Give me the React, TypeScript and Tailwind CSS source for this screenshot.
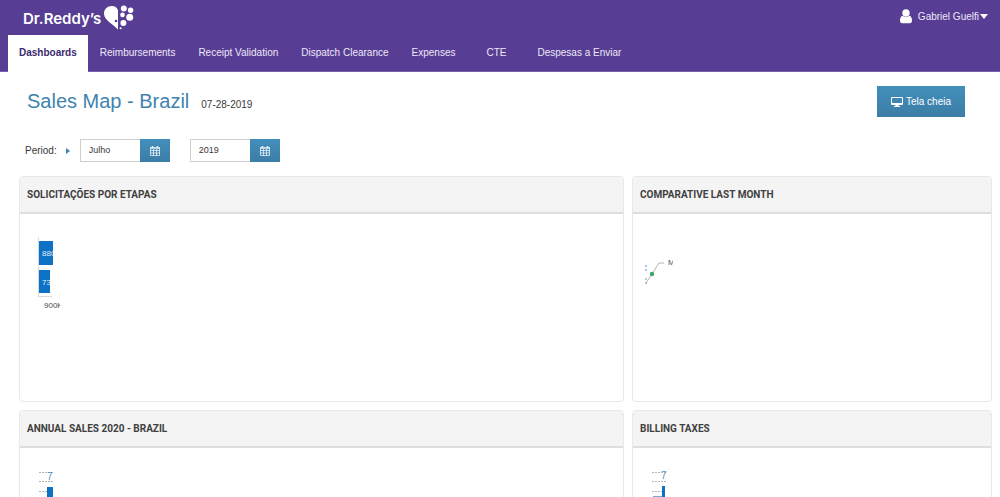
import { ReactNode } from "react";

const tabs = [
  "Reimbursements",
  "Receipt Validation",
  "Dispatch Clearance",
  "Expenses",
  "CTE",
  "Despesas a Enviar",
];

export default function App() {
  return (
    <div className="min-h-screen bg-white font-['Liberation_Sans',Arial,sans-serif] text-[10px] text-[#393939]">
      <Header />
      <main className="pl-[19px] pr-2 pb-2">
        <div className="flex items-start justify-between pl-2 pr-[27px] pt-[14px]">
          <div className="flex items-baseline gap-3">
            <h1 className="text-[20px] leading-[30px] text-[#3f83af]">Sales Map - Brazil</h1>
            <span>07-28-2019</span>
          </div>
          <button className="flex h-[31px] items-center gap-[3px] bg-linear-to-b from-[#428fbc] to-[#3c7da6] px-[14px] text-white">
            <MonitorIcon />
            Tela cheia
          </button>
        </div>

        <form className="flex items-center pl-[6px] pt-[22px] pb-[14px]">
          <span>Period:</span>
          <svg className="ml-[9px] mr-[10px] h-[6px] w-1" viewBox="0 0 4 6" fill="#3f83af">
            <path d="M0 0l4 3-4 3z" />
          </svg>
          <DateField label="Month" value="Julho" />
          <span className="w-5" />
          <DateField label="Year" value="2019" />
        </form>

        <div className="grid grid-cols-[605fr_360fr] gap-2">
          <Panel title="SOLICITAÇÕES POR ETAPAS">
            <StagesChart />
          </Panel>
          <Panel title="COMPARATIVE LAST MONTH">
            <ComparativeChart />
          </Panel>
          <Panel title="ANNUAL SALES 2020 - BRAZIL">
            <AnnualChart />
          </Panel>
          <Panel title="BILLING TAXES">
            <BillingChart />
          </Panel>
        </div>
      </main>
    </div>
  );
}

function Header() {
  return (
    <header className="border-b border-[#7a62ab] bg-[#573d94] text-[#eee8f7]">
      <div className="flex h-[35px] items-center justify-between pl-[23px] pr-3">
        <a href="#" className="flex items-center gap-[3px] text-white">
          <span className="pt-1 font-['Inter',sans-serif] text-[15px] font-semibold">Dr.Reddy’s</span>
          <Logo />
        </a>
        <button className="flex items-center gap-[6px] pb-[2px]">
          <svg className="h-[15px] w-3" viewBox="0 0 12 15" fill="white">
            <circle cx="6" cy="4" r="3.7" />
            <path d="M2.6 6.8C.8 7.3 0 9 0 11.700c0 1.500.8 2.500 2.200 2.500h7.600c1.400 0 2.200-1 2.200-2.500 0-2.700-.8-4.400-2.600-4.900-1.900 1.900-4.900 1.900-6.800 0z" />
          </svg>
          <span className="flex items-center gap-px">
            Gabriel Guelfi
            <svg className="h-[5px] w-2" viewBox="0 0 8 5" fill="white">
              <path d="M0 0h8L4 5z" />
            </svg>
          </span>
        </button>
      </div>
      <nav className="flex h-9 items-stretch gap-px pl-2">
        <a href="#" className="-mb-px flex items-center bg-white px-[11px] pb-[2px] font-bold text-[#3d2a6e]">
          Dashboards
        </a>
        {tabs.map((tab) => (
          <a key={tab} href="#" className="flex min-w-[58px] items-center justify-center px-[11px] pb-px">
            {tab}
          </a>
        ))}
      </nav>
    </header>
  );
}

function Panel({ title, children }: { title: string; children: ReactNode }) {
  return (
    <section className="overflow-hidden rounded-[4px] border border-[#e8e8e8]">
      <h2 className="flex h-[37px] items-center border-b-2 border-[#dedede] bg-[#f4f4f4] px-[7px] pb-px font-['Roboto',sans-serif] font-bold text-[#404040]">
        {title}
      </h2>
      <div className="h-[187px]">{children}</div>
    </section>
  );
}

function DateField({ label, value }: { label: string; value: string }) {
  return (
    <div className="flex h-[23px]">
      <input
        aria-label={label}
        defaultValue={value}
        className="w-[60px] border border-r-0 border-[#cfcfcf] bg-white px-2 text-[9px]"
      />
      <button
        type="button"
        aria-label={`Pick ${label.toLowerCase()}`}
        className="flex w-[30px] items-center justify-center bg-linear-to-b from-[#428fbc] to-[#3c7da6]"
      >
        <CalendarIcon />
      </button>
    </div>
  );
}

function Logo() {
  return (
    <svg className="h-[26px] w-[30px]" viewBox="0 0 30 26" fill="white">
      <path
        fillRule="evenodd"
        d="M14 5.200C13.200 2.500 10.800 1 7.800 1 3.500 1 0 4.200 0 8.200c0 4.600 3.500 7.300 7 10.300 2.600 2.200 5 4 7 6zM12 14.700a1.300 1.300 0 1 0 0 2.600 1.300 1.300 0 0 0 0-2.600z"
      />
      <circle cx="19.800" cy="3.400" r="3" />
      <circle cx="26.600" cy="5.300" r="2.700" />
      <circle cx="18.500" cy="9.900" r="2.300" />
      <circle cx="25.700" cy="12.200" r="3.500" />
      <circle cx="19.400" cy="18" r="3" />
      <circle cx="16.600" cy="23.200" r="1" />
    </svg>
  );
}

function MonitorIcon() {
  return (
    <svg className="h-[10px] w-3" viewBox="0 0 12 10" fill="white">
      <path
        fillRule="evenodd"
        d="M1 0h10q1 0 1 1v6q0 1-1 1H7.500v1H9v1H3V9h1.500V8H1Q0 8 0 7V1q0-1 1-1zM1 1v5h10V1z"
      />
    </svg>
  );
}

function CalendarIcon() {
  return (
    <svg className="h-[10px] w-[10px]" viewBox="0 0 10 10" stroke="#e4eff6">
      <path d="M0 2h10M2.500 0v2.500M7.500 0v2.500" strokeWidth="1.600" />
      <path d="M.5 2v7.500h9V2M0 4.500h10M0 7h10M3.500 3v7M6.500 3v7" fill="none" strokeWidth=".8" />
    </svg>
  );
}

function StagesChart() {
  return (
    <svg className="h-[100px] w-20 text-[8px]" viewBox="0 0 80 100">
      <clipPath id="stages-first">
        <path d="M19 27h14v24H19z" />
      </clipPath>
      <clipPath id="stages-second">
        <path d="M19 56h11v23H19z" />
      </clipPath>
      <clipPath id="stages-axis">
        <path d="M18 82h22v18H18z" />
      </clipPath>
      <path d="M18.500 24v59M18 82.500h14" fill="none" stroke="#d3dae0" />
      <g clipPath="url(#stages-first)">
        <path d="M19 27h14v24H19z" fill="#0d72c6" />
        <text x="22" y="42" fill="#e3f0fb">880K</text>
      </g>
      <g clipPath="url(#stages-second)">
        <path d="M19 56h11v23H19z" fill="#0d72c6" />
        <text x="22" y="71" fill="#e3f0fb">73K</text>
      </g>
      <g clipPath="url(#stages-axis)">
        <text x="24" y="94" fill="#505050">900K</text>
      </g>
    </svg>
  );
}

function ComparativeChart() {
  return (
    <svg className="h-[100px] w-[60px] text-[8px]" viewBox="0 0 60 100">
      <clipPath id="comparative-label">
        <path d="M34 40h6v16h-6z" />
      </clipPath>
      <path d="M13 69l6-9 7-11h5" fill="none" stroke="#b5b5b5" />
      <circle cx="19" cy="60" r="2.200" fill="#3fa66c" />
      <path d="M13 51v2M13 55v2" stroke="#4b8fd0" />
      <path d="M13 64v2M13 68v2" stroke="#5cab78" />
      <text x="35" y="51" fill="#505050" clipPath="url(#comparative-label)">
        Maio
      </text>
    </svg>
  );
}

function AnnualChart() {
  return (
    <svg className="h-[100px] w-[60px] text-[10px]" viewBox="0 0 60 100">
      <path d="M19 24.500h14M19 33.500h14M19 43.500h8" stroke="#b5b5b5" strokeDasharray="2 1" />
      <text x="27" y="32" fill="#5b8fc7">7</text>
      <path d="M27 39h6v61h-6z" fill="#0d72c6" />
    </svg>
  );
}

function BillingChart() {
  return (
    <svg className="h-[100px] w-[60px] text-[10px]" viewBox="0 0 60 100">
      <path d="M19 24.500h14M19 33.500h14M19 43.500h10" stroke="#b5b5b5" strokeDasharray="2 1" />
      <text x="28" y="31" fill="#5b8fc7">7</text>
      <path d="M20 48h10v52H20z" fill="#7fa9d6" />
      <path d="M29 38h3v62h-3z" fill="#0d72c6" />
    </svg>
  );
}
